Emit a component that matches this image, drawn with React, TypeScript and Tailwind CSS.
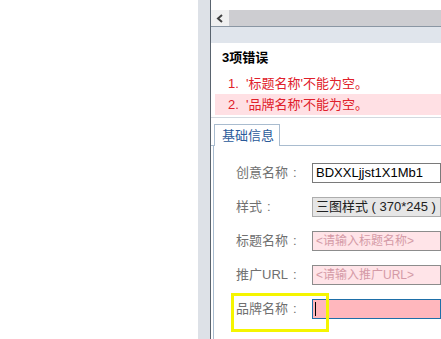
import React from "react";

// Validation panel — error summary above a tabbed form

const font = "font-['Liberation_Sans','Noto_Sans_CJK_SC',sans-serif]";

function Field({
  label,
  children,
}: {
  label: string;
  children: React.ReactNode;
}) {
  return (
    <div className="flex h-[20px] items-center">
      <div className="w-[76px] shrink-0 flex items-center text-[13px] text-[#707070]">
        <span>{label}</span>
        <span className="ml-[5px]">:</span>
      </div>
      <div className="flex-1 h-full">{children}</div>
    </div>
  );
}

export default function App() {
  return (
    <div className={`relative flex w-[441px] h-[339px] overflow-hidden bg-white ${font}`}>
      {/* left blank area */}
      <div className="w-[198px] shrink-0 bg-white" />
      {/* splitter strip */}
      <div className="w-[12px] shrink-0 bg-[#dde1e7]" />
      <div className="w-px shrink-0 bg-[#59636e]" />

      <div className="flex-1 flex flex-col min-w-0">
        <div className="h-[10px] bg-white" />
        {/* horizontal scrollbar */}
        <div className="flex h-[16px]">
          <div className="w-[18px] flex items-center justify-center bg-[#f0f0f0]">
            <svg width="8" height="9" viewBox="0 0 8 9">
              <path d="M6 1L2 4.5L6 8" fill="none" stroke="#404040" strokeWidth="2" />
            </svg>
          </div>
          <div className="flex-1 bg-[#cdcdd1]" />
        </div>
        <div className="h-px bg-[#8a96a3]" />
        <div className="h-[16px] bg-[#e0e5ec]" />

        {/* error summary */}
        <div className="h-[30px] flex items-center pl-[11px] text-[13px] font-bold text-black">
          3项错误
        </div>
        <div className="h-[21px] flex items-center pl-[17px] text-[13px] text-[#e0202a]">
          1.&nbsp;&nbsp;'标题名称'不能为空。
        </div>
        <div className="h-[21px] ml-[4px] flex items-center pl-[13px] text-[13px] text-[#e0202a] bg-[#ffe0e4]">
          2.&nbsp;&nbsp;'品牌名称'不能为空。
        </div>
        <div className="h-[2px]" />
        <div className="h-px bg-[#d4d9df]" />

        {/* tabs */}
        <div className="h-[6px]" />
        <div className="flex h-[22px]">
          <div className="w-[3px] border-b border-[#a9bccf]" />
          <div className="w-[66px] flex items-center pl-[7px] border border-b-0 border-[#a9bccf] text-[13px] text-[#2a5a9a]">
            基础信息
          </div>
          <div className="flex-1 border-b border-[#a9bccf]" />
        </div>

        {/* tab pane */}
        <div className="flex-1 ml-[2px] border-l border-[#a9bccf] pl-[22px] pt-[17px] flex flex-col gap-[14px]">
          <Field label="创意名称">
            <div className="h-full flex items-center pl-[3px] bg-white border border-[#7a7a7a] text-[13px] text-black">
              BDXXLjjst1X1Mb1
            </div>
          </Field>
          <Field label="样式">
            <div className="h-full flex items-center pl-[3px] bg-[#e6e6e6] border border-[#adadad] text-[13px] text-[#222]">
              三图样式 ( 370*245 )
            </div>
          </Field>
          <Field label="标题名称">
            <div className="h-full flex items-center pl-[3px] bg-[#ffe4e8] border border-[#8c8c8c] text-[12px] text-[#d49aa6]">
              &lt;请输入标题名称&gt;
            </div>
          </Field>
          <Field label="推广URL">
            <div className="h-full flex items-center pl-[3px] bg-[#ffe4e8] border border-[#8c8c8c] text-[12px] text-[#d49aa6]">
              &lt;请输入推广URL&gt;
            </div>
          </Field>
          <Field label="品牌名称">
            <div className="h-full flex items-center pl-[2px] bg-[#ffb7bd] border border-[#1e6fa8]">
              <div className="w-px h-[14px] bg-black" />
            </div>
          </Field>
        </div>
      </div>

      {/* yellow highlight annotation */}
      <div className="absolute left-[231px] top-[293px] w-[98px] h-[39px] border-[3px] border-[#f5f500]" />
    </div>
  );
}
